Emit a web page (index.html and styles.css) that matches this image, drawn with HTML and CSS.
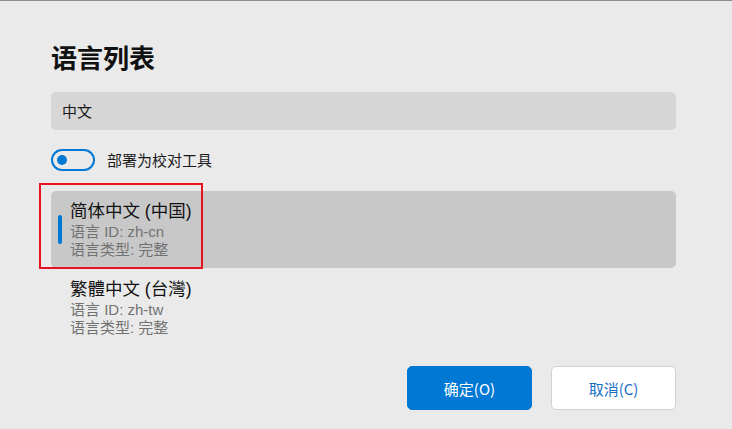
FILE: index.html
```html
<!DOCTYPE html>
<html lang="zh-CN">
<head>
<meta charset="utf-8">
<link rel="stylesheet" href="styles.css">
</head>
<body>
<div class="dialog">
  <h1 class="title">语言列表</h1>
  <div class="search">中文</div>
  <div class="toggle-row">
    <span class="toggle"><span class="knob"></span></span>
    <span class="toggle-label">部署为校对工具</span>
  </div>
  <div class="list">
    <div class="item selected">
      <span class="indicator"></span>
      <div class="item-title">简体中文 (中国)</div>
      <div class="item-sub">语言 ID: zh-cn</div>
      <div class="item-sub">语言类型: 完整</div>
    </div>
    <div class="item">
      <div class="item-title">繁體中文 (台灣)</div>
      <div class="item-sub">语言 ID: zh-tw</div>
      <div class="item-sub">语言类型: 完整</div>
    </div>
    <div class="highlight"></div>
  </div>
  <div class="buttons">
    <button class="btn primary">确定(O)</button>
    <button class="btn secondary">取消(C)</button>
  </div>
</div>
</body>
</html>
```
FILE: styles.css
```css
html, body {
  margin: 0;
  padding: 0;
  background: #eaeaea;
}
body {
  font-family: "Noto Sans CJK SC", "Noto Sans", sans-serif;
  color: #1a1a1a;
  width: 732px;
  height: 429px;
  overflow: hidden;
}
.dialog {
  box-sizing: border-box;
  height: 429px;
  border-top: 1px solid #8c8c8c;
  padding: 0 56px 0 51px;
  display: flex;
  flex-direction: column;
}
.title {
  margin: 36px 0 0 0;
  font-size: 26px;
  line-height: 40px;
  font-weight: 700;
  color: #111;
}
.search {
  margin-top: 15px;
  height: 38px;
  box-sizing: border-box;
  background: #d6d6d6;
  border-radius: 5px;
  padding-left: 11px;
  font-size: 15px;
  line-height: 38px;
  color: #1a1a1a;
}
.toggle-row {
  margin-top: 19px;
  display: flex;
  align-items: center;
  height: 22px;
}
.toggle {
  box-sizing: border-box;
  width: 44px;
  height: 22px;
  border: 2px solid #0078d4;
  border-radius: 11px;
  display: flex;
  align-items: center;
  padding-left: 4px;
}
.knob {
  width: 10px;
  height: 10px;
  border-radius: 50%;
  background: #0078d4;
}
.toggle-label {
  margin-left: 12px;
  font-size: 15px;
  line-height: 22px;
  color: #1a1a1a;
}
.list {
  position: relative;
  margin-top: 20px;
  display: flex;
  flex-direction: column;
  gap: 1px;
}
.item {
  position: relative;
  height: 77px;
  box-sizing: border-box;
  padding: 9px 0 0 19px;
  border-radius: 5px;
  font-family: "Liberation Sans", "Noto Sans CJK SC", sans-serif;
}
.item.selected {
  background: #c8c8c8;
}
.indicator {
  position: absolute;
  left: 7px;
  top: 24px;
  width: 4px;
  height: 29px;
  border-radius: 2px;
  background: #0078d4;
}
.item-title {
  font-size: 17.5px;
  line-height: 23px;
  color: #111;
}
.item-sub {
  font-size: 15px;
  line-height: 18px;
  color: #727272;
}
.highlight {
  position: absolute;
  left: -12px;
  top: -8px;
  width: 164px;
  height: 86px;
  box-sizing: border-box;
  border: 2px solid #e81123;
  pointer-events: none;
}
.buttons {
  margin-top: auto;
  margin-bottom: 19px;
  display: flex;
  justify-content: flex-end;
  gap: 19px;
}
.btn {
  width: 125px;
  height: 44px;
  box-sizing: border-box;
  border-radius: 5px;
  font-family: "Noto Sans CJK SC", "Noto Sans", sans-serif;
  font-size: 15px;
  cursor: pointer;
}
.btn.primary {
  background: #0078d4;
  border: 1px solid #0078d4;
  color: #fff;
}
.btn.secondary {
  background: #fff;
  border: 1px solid #d2d2d2;
  color: #1a6fc4;
}
```
